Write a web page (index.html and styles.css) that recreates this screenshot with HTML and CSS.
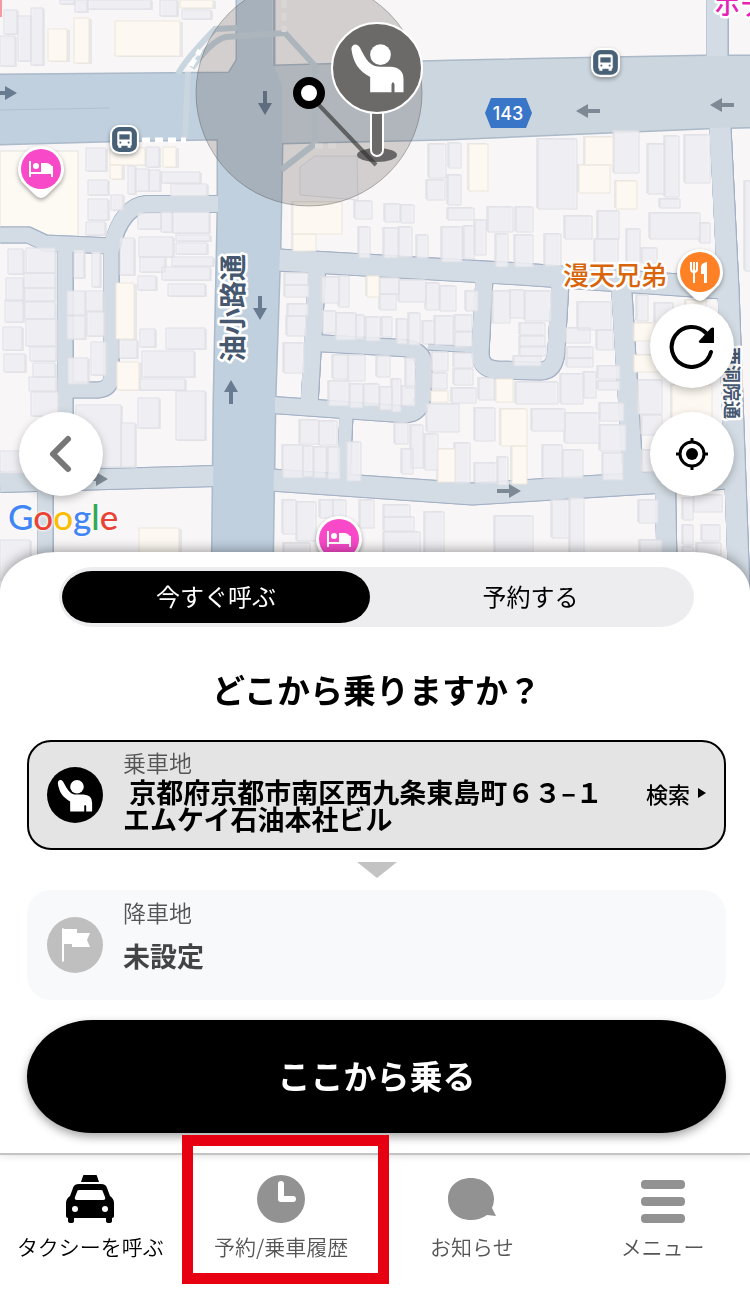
FILE: index.html
```html
<!DOCTYPE html>
<html lang="ja">

<head>
    <meta charset="UTF-8">
    <meta name="viewport" content="width=device-width, initial-scale=1.0">
    <link rel="stylesheet" href="styles.css">
    <title>タクシーを呼ぶ</title>
</head>

<body>
    <!-- shared icons -->
    <svg class="defs" aria-hidden="true">
        <symbol id="person" viewBox="480 130 164 150">
            <circle cx="571" cy="165" r="31" />
            <path d="M484 150C482 134 500 128 508 142C525 172 535 201 570 201H600Q640 203 640 238V278H613V254Q608 242 604 254V278H540V232C505 212 490 190 484 150Z" />
        </symbol>
        <symbol id="bus" viewBox="0 0 30 30">
            <rect x="1" y="1" width="28" height="28" rx="9" fill="#fff" />
            <rect x="3" y="3" width="24" height="24" rx="7" fill="#486075" />
            <path fill="#fff" d="M10 7h10q2 0 2 2v11q0 1-1 1v2h-3v-2h-6v2H9v-2q-1 0-1-1V9q0-2 2-2z" />
            <path fill="#486075" d="M10 10h10v5H10z" />
            <circle cx="11" cy="18" r="1" fill="#486075" />
            <circle cx="19" cy="18" r="1" fill="#486075" />
        </symbol>
        <symbol id="hotel" viewBox="0 0 48 56">
            <path fill="#fff" d="M24 1a23 23 0 0 1 19 36Q36 44 30 50Q24 56 18 50Q12 44 5 37A23 23 0 0 1 24 1z" />
            <circle cx="24" cy="24" r="20" fill="#f849c9" />
            <path fill="none" stroke="#fff" stroke-width="2" d="M13 16v16M13 28h23M35 21v11" />
            <circle cx="19" cy="21" r="3" fill="#fff" />
            <path fill="#fff" d="M24 18h6q5 1 6 6v3H24z" />
        </symbol>
        <symbol id="arrow" viewBox="0 0 24 14">
            <path d="M0 5h12V0l12 7-12 7V9H0z" />
        </symbol>
    </svg>

    <main class="app">
        <section class="map" aria-label="地図">
            <svg class="map-canvas" viewBox="0 0 750 592" preserveAspectRatio="xMidYMin slice">
                <defs>
                    <g id="lanes">
                        <path stroke-width="15" d="M0 235H28L45 243L112 246" />
                        <path stroke-width="16" d="M111 250C117 217 133 205 146 204H222" />
                        <path stroke-width="15" d="M65 244V480" />
                        <path stroke-width="15" d="M111 244V378Q110 389 98 390H65" />
                        <path stroke-width="20" d="M0 482L216 476" />
                        <path stroke-width="15" d="M45 488V592" />
                        <path stroke-width="21" d="M278 260L520 274L722 288" />
                        <path stroke-width="17" d="M317 265L309 405" />
                        <path stroke-width="16" d="M273 405L400 414Q420 416 422 398L424 366Q424 350 402 348L315 343" />
                        <path stroke-width="17" d="M484 278L480 353Q480 369 497 370L540 371Q555 371 556 350L560 283" />
                        <path stroke-width="5" d="M428 347L474 350" />
                        <path stroke-width="20" d="M621 285L633 482" />
                        <path stroke-width="21" d="M271 480L472 494L632 484L728 478" />
                        <path stroke-width="13" d="M346 415L343 478" />
                        <path stroke-width="20" d="M665 485L667 592" />
                        <path stroke-width="21" d="M717 -5V60L720 128L728 290L739 592" />
                    </g>
                </defs>

                <rect class="land" width="750" height="592" />
                <path class="lot" d="M0 151H78V241H38L28 230L0 227z" />

                <use href="#lanes" class="lane-edge" />
                <path class="road-edge" d="M282 143L450 139L708 128L750 127V56L705 56L450 61L274 66V-2H237V60L229 73L0 75V144L110 141L218 139V210L214 400L212 592H272L275 400L280 250z" />
                <use href="#lanes" class="lane" />
                <path class="road-side" d="M272 66L450 61L705 56H750V127L708 128L450 139L280 143z" />
                <path class="road-main" d="M237 -2H272V62L282 85V143L280 250L275 400L272 592H212L214 400L218 210V139L110 141L0 144V75L229 73L237 60z" />
                <path class="road-line" d="M0 110L110 108" />

                <g id="buildings">
                    <path class="house" d="M300 167L315 156H357L358 200L300 195z" />
                </g>

                <!-- crossings around the junction -->
                <path class="walkway" d="M178 74Q185 60 215 29L237 28M192 68Q212 40 226 37L285 33L315 66V143M188 72L185 138M316 143L281 170" />
                <path class="crossing" d="M191 66L200 50M142 140H186M284 0V32" />
                <path class="crossing" d="M315 146H337" />

                <g class="arrow">
                    <use href="#arrow" x="-7" y="86" width="24" height="14" />
                    <use href="#arrow" width="24" height="14" transform="translate(272 91) rotate(90)" />
                    <use href="#arrow" width="24" height="14" transform="translate(267 296) rotate(90)" />
                    <use href="#arrow" width="24" height="14" transform="translate(224 404) rotate(-90)" />
                </g>
                <g class="arrow arrow-gray">
                    <use href="#arrow" width="24" height="14" transform="translate(600 118) rotate(180)" />
                    <use href="#arrow" width="24" height="14" transform="translate(734 112) rotate(180)" />
                    <use href="#arrow" x="497" y="484" width="24" height="14" />
                    <use href="#arrow" x="84" y="472" width="24" height="14" />
                </g>

                <path class="route-badge" d="M491 98H526L532 113L526 128H491L485 113z" />
                <text class="route-number" x="508" y="120">143</text>

                <text class="street" transform="translate(243 362) rotate(-90)">油小路通</text>
                <text class="street street-small" transform="translate(725 347) rotate(90)">西洞院通</text>
                <text class="poi poi-food" x="563" y="285">漫天兄弟</text>
                <text class="poi poi-hotel" x="714" y="15">ホテ</text>
                <path class="alert" d="M0 0V17" />

                <g class="marker">
                    <use href="#bus" x="109" y="124" width="31" height="31" />
                    <use href="#bus" x="590" y="47" width="31" height="31" />
                    <use href="#hotel" x="17" y="145" width="48" height="56" />
                    <use href="#hotel" x="315" y="515" width="48" height="56" />
                    <g transform="translate(676 248)">
                        <path fill="#fff" d="M24 1a23 23 0 0 1 19 36Q36 44 30 50Q24 56 18 50Q12 44 5 37A23 23 0 0 1 24 1z" />
                        <circle cx="24" cy="24" r="20" fill="#ff8126" />
                        <path fill="none" stroke="#fff" stroke-width="2" d="M15 14v7q0 3 3 3t3-3v-7M18 14v21" />
                        <path fill="#fff" d="M25 26v-7q0-4 6-5v21h-3v-9z" />
                    </g>
                </g>

                <!-- pickup position -->
                <circle class="range" cx="309" cy="93" r="113" />
                <ellipse class="pin-foot" cx="377" cy="155" rx="20" ry="7" />
                <path class="pin-stick" d="M371 105V150A6 6 0 0 0 383 150V105" />
                <path class="pin-link" d="M318 104L376 165" />
                <circle class="pin-head" cx="377" cy="68" r="45" />
                <use href="#person" class="pin-person" x="350" y="43" width="55" height="50" />
                <circle class="pin-dot" cx="309" cy="93" r="12" />
            </svg>

            <button class="round back" aria-label="戻る">
                <svg width="42" height="42" viewBox="0 0 42 42" fill="none" stroke="#777" stroke-width="6" stroke-linecap="round" stroke-linejoin="round">
                    <path d="M28 6L13 21L28 36" />
                </svg>
            </button>
            <div class="map-tools">
                <button class="round" aria-label="更新">
                    <svg width="46" height="46" viewBox="0 0 46 46">
                        <path fill="none" stroke="#000" stroke-width="4" stroke-linecap="round" d="M42 29A20 20 0 1 1 37 10" />
                        <path d="M45 5V20H31q-2-1-1-2L42 5q2-1 3 0z" />
                    </svg>
                </button>
                <button class="round" aria-label="現在地">
                    <svg width="34" height="34" viewBox="0 0 34 34">
                        <circle cx="17" cy="17" r="12" fill="none" stroke="#000" stroke-width="3" />
                        <circle cx="17" cy="17" r="6" />
                        <path stroke="#000" stroke-width="3" d="M17 1v5M17 28v5M1 17h5M28 17h5" />
                    </svg>
                </button>
            </div>
            <div class="google"><span class="g-blue">G</span><span class="g-red">o</span><span class="g-yellow">o</span><span class="g-blue">g</span><span class="g-green">l</span><span class="g-red">e</span></div>
        </section>

        <section class="sheet">
            <div class="segment">
                <button class="segment-btn selected">今すぐ呼ぶ</button>
                <button class="segment-btn">予約する</button>
            </div>

            <h1>どこから乗りますか？</h1>

            <button class="place place-from">
                <span class="place-icon">
                    <svg width="36" height="33"><use href="#person" /></svg>
                </span>
                <span class="place-text">
                    <span class="place-label">乗車地</span>
                    <span class="place-value">&nbsp;京都府京都市南区西九条東島町６３–１<br>エムケイ石油本社ビル</span>
                </span>
                <span class="search">検索
                    <svg width="8" height="12" viewBox="0 0 8 12"><path d="M0 1L8 6L0 11z" /></svg>
                </span>
            </button>

            <svg class="down" width="40" height="16" viewBox="0 0 40 16"><path d="M0 0H40L20 16z" /></svg>

            <button class="place place-to">
                <span class="place-icon">
                    <svg width="30" height="36" viewBox="0 0 30 36"><path d="M2 2Q3 0 4 2H17V6H30L27 13L30 20H12V17H4V34Q3 36 2 34z" /></svg>
                </span>
                <span class="place-text">
                    <span class="place-label">降車地</span>
                    <span class="place-value">未設定</span>
                </span>
            </button>

            <button class="submit">ここから乗る</button>
        </section>

        <nav class="tabs">
            <a href="#call" class="tab current">
                <svg width="50" height="48" viewBox="0 0 50 48">
                    <path d="M19 0h12q1 0 1 1l2 6H16l2-6q0-1 1-1z" />
                    <path fill-rule="evenodd" d="M14 9h22q5 0 6 4l3 8q4 3 4 7v13q0 2-2 2v3q0 2-3 2t-3-2v-3H9v3q0 2-3 2t-3-2v-3q-2 0-2-2V28q0-4 4-7l3-8q1-4 6-4zM14 15q-2 0-2 2l-2 5q-1 3 2 3h26q3 0 2-3l-2-5q0-2-2-2zM10 31a3 3 0 1 0 0 6a3 3 0 1 0 0-6zM40 31a3 3 0 1 0 0 6a3 3 0 1 0 0-6z" />
                </svg>
                タクシーを呼ぶ
            </a>
            <a href="#history" class="tab highlight">
                <svg width="48" height="48" viewBox="0 0 48 48">
                    <circle cx="24" cy="24" r="24" />
                    <path fill="none" stroke="#fff" stroke-width="6" stroke-linecap="round" stroke-linejoin="round" d="M24 9V24H36" />
                </svg>
                予約/乗車履歴
            </a>
            <a href="#news" class="tab">
                <svg width="50" height="48" viewBox="0 0 50 48">
                    <path d="M24 3C37 3 47 12 47 24Q47 29 45 33L49 41L40 40Q33 45 24 45C10 45 1 36 1 24S10 3 24 3z" />
                </svg>
                お知らせ
            </a>
            <a href="#menu" class="tab">
                <svg width="44" height="48" viewBox="0 0 44 48">
                    <rect y="5" width="44" height="9" rx="4" />
                    <rect y="22" width="44" height="9" rx="4" />
                    <rect y="39" width="44" height="9" rx="4" />
                </svg>
                メニュー
            </a>
        </nav>
    </main>

    <script src="map.js"></script>
</body>

</html>
```
FILE: styles.css
```css
* {
    box-sizing: border-box;
}

body {
    margin: 0;
    background-color: white;
    color: black;
    font-family: "Noto Sans CJK JP", sans-serif;
}

button {
    border: none;
    padding: 0;
    color: inherit;
    font-family: inherit;
    cursor: pointer;
}

.defs {
    position: absolute;
    width: 0;
    height: 0;
}

.app {
    overflow: hidden;
}

/* map */
.map {
    position: relative;
    height: 592px;
    overflow: hidden;
}

.map-canvas {
    display: block;
    width: 100%;
    height: 100%;
}

.land {
    fill: #f8f6f7;
}

.lot {
    fill: #fdf9f3;
    stroke: #e5e2dc;
}

.lane {
    fill: none;
    stroke: #d3dce4;
}

.lane-edge {
    fill: none;
    stroke: #a3b0c5;
    filter: drop-shadow(0 1px 0 #a3b0c5) drop-shadow(0 -1px 0 #a3b0c5) drop-shadow(1px 0 0 #a3b0c5);
}

.road-edge {
    fill: none;
    stroke: #abb9c8;
    stroke-width: 3;
}

.road-main {
    fill: #c0d0df;
}

.road-side {
    fill: #ccd6de;
}

.road-line {
    stroke: #b3c1cc;
}

.house {
    fill: #f0f0f6;
    fill-opacity: 0.75;
    stroke: #dedfe5;
}

.shop {
    fill: #fdf9f2;
    stroke: #ece7dd;
}

.shade {
    fill: #dddddf;
    fill-opacity: 0.6;
}

.walkway {
    fill: none;
    stroke: #c9d5df;
    stroke-width: 6;
}

.crossing {
    fill: none;
    stroke: white;
    stroke-width: 5;
    stroke-dasharray: 8 5;
}

.arrow {
    fill: #687b91;
}

.arrow-gray {
    fill: #7d8994;
}

.route-badge {
    fill: #3976c8;
}

.route-number {
    fill: white;
    font: 500 18px Inter, sans-serif;
    text-anchor: middle;
}

.street,
.poi {
    paint-order: stroke;
    stroke: white;
    stroke-width: 5px;
    stroke-linejoin: round;
    font-weight: 500;
}

.street {
    fill: #465870;
    font-size: 27px;
    font-weight: 700;
}

.street-small {
    font-size: 18px;
}

.poi {
    font-size: 26px;
}

.poi-food {
    fill: #d8650c;
}

.poi-hotel {
    fill: #e524b5;
}

.alert {
    stroke: #f59aa0;
    stroke-width: 4;
}

.marker {
    filter: drop-shadow(0 2px 2px rgba(0, 0, 0, 0.35));
}

.range {
    fill: rgba(65, 55, 50, 0.2);
    stroke: rgba(80, 80, 80, 0.4);
}

.pin-foot {
    fill: #686666;
}

.pin-stick,
.pin-head {
    fill: #6b6a69;
    stroke: white;
    stroke-width: 2;
}

.pin-link {
    stroke: rgba(50, 50, 50, 0.65);
    stroke-width: 4;
}

.pin-person {
    fill: white;
}

.pin-dot {
    fill: white;
    stroke: black;
    stroke-width: 8;
}

.round {
    display: flex;
    align-items: center;
    justify-content: center;
    width: 84px;
    height: 84px;
    border-radius: 50%;
    background: white;
    box-shadow: 0 3px 8px rgba(0, 0, 0, 0.25);
}

.back {
    position: absolute;
    top: 412px;
    left: 19px;
}

.map-tools {
    position: absolute;
    top: 304px;
    right: 16px;
    display: flex;
    flex-direction: column;
    gap: 24px;
}

.google {
    position: absolute;
    top: 494px;
    left: 8px;
    font-family: Lato, sans-serif;
    font-size: 35px;
    font-weight: 500;
    line-height: 44px;
    text-shadow: 0 0 3px white, 0 0 3px white;
}

.g-blue {
    color: #4285f4;
}

.g-red {
    color: #ea4335;
}

.g-yellow {
    color: #fbbc04;
}

.g-green {
    color: #34a853;
}

/* bottom sheet */
.sheet {
    position: relative;
    display: flex;
    flex-direction: column;
    margin-top: -40px;
    padding: 15px 24px 20px 27px;
    border-radius: 56px 56px 0 0 / 40px 40px 0 0;
    background: white;
    box-shadow: 0 -2px 12px rgba(0, 0, 0, 0.35);
}

.segment {
    display: flex;
    height: 60px;
    margin: 0 32px;
    padding: 4px 3px;
    border-radius: 34px / 30px;
    background: #ededef;
}

.segment-btn {
    flex: 1;
    padding-bottom: 4px;
    border-radius: 30px / 26px;
    background: none;
    font-size: 24px;
}

.selected {
    flex: 0 0 49%;
    color: white;
    background: black;
}

h1 {
    margin: 42px 0 31px;
    font-size: 33px;
    font-weight: 700;
    line-height: 40px;
    text-align: center;
}

.place {
    display: flex;
    align-items: center;
    gap: 20px;
    min-height: 110px;
    padding: 4px 18px 16px;
    border: 2px solid transparent;
    border-radius: 24px;
    text-align: left;
}

.place-from {
    border-color: black;
    background: #e4e4e4;
}

.place-to {
    background: #f8f9fb;
    color: #444;
}

.place-icon {
    display: flex;
    align-items: center;
    justify-content: center;
    width: 56px;
    height: 56px;
    margin-top: 12px;
    border-radius: 50%;
    background: black;
    fill: white;
}

.place-to .place-icon {
    background: #bfbfbf;
}

.place-text {
    flex: 1;
    display: flex;
    flex-direction: column;
}

.place-label {
    color: #555;
    font-size: 23px;
    font-weight: 350;
    line-height: 32px;
}

.place-value {
    display: flex;
    flex-direction: column;
    justify-content: center;
    min-height: 54px;
    font-size: 27px;
    font-weight: 700;
    line-height: 27px;
}

.search {
    display: flex;
    align-items: center;
    gap: 8px;
    margin-top: 8px;
    font-size: 22px;
    font-weight: 500;
}

.down {
    align-self: center;
    margin: 12px 0;
    fill: #c3c3c3;
}

.submit {
    height: 113px;
    margin-top: 20px;
    padding-bottom: 4px;
    border-radius: 66px / 57px;
    background: black;
    box-shadow: 0 4px 10px rgba(0, 0, 0, 0.35);
    color: white;
    font-size: 33px;
    font-weight: 700;
}

/* tab bar */
.tabs {
    position: relative;
    display: grid;
    grid-template-columns: repeat(4, 1fr);
    margin: 0 -8px 0 -5px;
    border-top: 2px solid #c4c4c4;
}

.tab {
    position: relative;
    display: flex;
    flex-direction: column;
    align-items: center;
    gap: 8px;
    padding: 20px 0 29px;
    color: #555;
    font-size: 21px;
    font-weight: 350;
    line-height: 30px;
    text-decoration: none;
}

.tab svg {
    fill: #929292;
}

.current {
    color: black;
}

.current svg {
    fill: black;
}

.highlight::after {
    content: "";
    position: absolute;
    top: -20px;
    right: -12px;
    bottom: 6px;
    left: -4px;
    border: 11px solid #e60012;
}
```
FILE: map.js
```js
// footprints as [x, y, width, height]
var westHouses = [
    [4,10,13,24],[0,36,15,30],[18,16,13,45],[31,8,12,57],[60,0,14,4],[75,0,12,12],[88,0,63,9],[160,0,17,16],[182,10,29,9],
    [86,148,20,23],[88,180,20,15],[88,199,20,21],[86,222,19,13],[111,195,12,15],[146,147,13,20],[128,166,7,28],[136,169,13,22],
    [149,170,11,21],[162,172,38,11],[171,184,36,12],[138,213,23,16],[161,212,11,20],[173,212,36,21],[139,237,34,20],[176,235,34,6],
    [176,243,31,11],[172,257,41,9],[120,238,14,37],[140,257,25,15],[162,267,48,13],[168,284,37,12],[138,276,18,14],[8,249,15,25],
    [26,248,29,25],[24,273,31,15],[6,278,17,23],[5,300,18,22],[25,288,30,13],[25,302,30,17],[26,319,30,27],[3,327,19,23],
    [4,354,21,18],[30,347,26,14],[33,363,22,14],[29,377,27,14],[31,392,27,24],[67,291,18,24],[86,291,17,20],[67,316,18,23],
    [87,312,17,24],[74,250,10,28],[92,252,8,35],[91,342,15,33],[68,358,20,26],[119,340,18,18],[140,329,15,18],[166,328,39,21],
    [142,351,52,26],[140,379,45,11],[138,398,21,30],[176,391,29,49],[76,405,45,62],[121,423,14,44],[0,451,26,22],[0,540,30,40]
];
var eastHouses = [
    [355,201,17,18],[385,204,15,18],[401,205,13,18],[359,227,11,31],[384,228,14,30],[399,227,13,30],[417,235,11,23],
    [429,144,17,34],[427,180,18,20],[449,143,12,25],[448,175,13,30],[448,208,26,12],[442,227,20,35],[464,226,10,33],[475,220,11,35],
    [488,207,25,25],[516,207,17,25],[496,234,12,33],[515,235,18,32],[538,139,39,70],[545,234,16,32],[565,216,27,23],[598,211,21,28],
    [595,239,23,30],[614,131,25,42],[648,144,16,50],[665,136,14,61],[685,135,25,48],[627,229,13,35],[642,248,15,15],[660,199,20,9],
    [650,213,50,26],[700,223,10,20],[745,181,8,90],
    [285,273,23,12],[285,285,24,12],[288,304,20,12],[287,316,19,20],[284,343,20,30],[322,277,17,26],[339,276,10,31],[380,278,19,16],
    [380,294,16,16],[399,280,27,22],[426,283,13,27],[440,286,16,25],[466,291,12,20],[323,311,13,22],[336,313,20,27],[356,315,8,24],
    [366,317,14,24],[382,317,10,20],[397,319,10,25],[409,313,11,32],[423,321,11,23],[435,316,18,29],[455,315,17,16],[455,332,17,15],
    [333,355,15,24],[348,355,17,26],[377,356,13,21],[406,358,9,30],[329,381,20,25],[350,384,13,24],[364,384,15,22],[380,387,12,23],
    [392,379,9,33],[402,386,13,20],[432,352,16,19],[432,373,15,16],[454,353,19,15],[454,369,19,16],[452,388,24,15],[479,378,15,22],
    [427,404,32,28],[475,408,20,33],[395,423,13,21],[411,425,12,43],[402,449,11,25],[425,434,13,36],[455,443,15,40],[475,463,22,20],
    [498,457,10,28],[300,420,19,24],[319,421,18,24],[283,445,20,33],[303,446,10,31],[314,447,12,31],[328,447,12,32],[347,442,14,39],
    [283,500,13,34],[297,502,19,39],[320,500,13,18],[333,500,13,18],[360,500,14,28],[384,505,26,12],[384,517,30,14],[384,532,36,24],
    [425,512,19,44],[495,516,38,40],[552,500,17,38],[570,498,14,58],[284,543,26,12],
    [493,291,17,32],[510,290,14,28],[525,291,26,30],[520,323,25,12],[520,336,25,11],[520,346,26,10],[514,356,27,10],[578,302,33,28],
    [597,330,16,20],[566,328,24,15],[567,347,26,11],[567,358,26,9],[598,366,22,13],[598,381,22,9],[516,382,42,22],[561,374,22,30],
    [584,372,12,26],[600,403,24,18],[532,409,33,22],[565,413,34,30],[600,425,26,26],[543,445,19,33],[563,450,20,28],[603,453,20,27],
    [637,295,11,26],[655,303,18,20],[638,380,24,34],[642,415,20,20],[642,450,15,22],[639,500,19,23],[640,540,22,14],[683,498,10,22],
    [694,495,28,17],[702,525,18,16],[683,525,10,20],[683,547,10,8],[697,543,24,12]
];
var westShops = [
    [48,29,19,32],[74,18,15,45],[115,21,65,35],[180,0,33,8],[110,148,35,17],[110,165,12,14],[163,147,13,20],
    [116,283,18,56],[117,362,22,28],[139,528,40,28]
];
var eastShops = [
    [469,144,19,47],[585,137,28,28],[579,165,31,28],[616,181,21,28],[293,202,49,32],[293,234,23,17],[367,276,12,21],
    [431,391,17,11],[496,379,17,23],[501,409,26,37],[512,446,15,38],[438,449,17,33],[634,323,20,18],[634,355,30,17],[672,385,40,60],
    [686,300,20,10]
];

function toPath(list, dx, dy) {
    return list.map(function (b) {
        return "M" + (b[0] + dx) + " " + (b[1] + dy) + "h" + b[2] + "v" + b[3] + "h" + -b[2] + "z";
    }).join("");
}

function draw(list, name, dx, dy) {
    var path = document.createElementNS("http://www.w3.org/2000/svg", "path");
    path.setAttribute("d", toPath(list, dx, dy));
    path.setAttribute("class", name);
    document.getElementById("buildings").appendChild(path);
}

// shaded walls go under the roofs
draw(westHouses, "shade", 2, 1);
draw(eastHouses, "shade", -2, -1);
draw(westShops, "shade", 3, 1);
draw(eastShops, "shade", -2, -1);
draw(westHouses, "house", 0, 0);
draw(eastHouses, "house", 0, 0);
draw(westShops, "shop", 0, 0);
draw(eastShops, "shop", 0, 0);
```
